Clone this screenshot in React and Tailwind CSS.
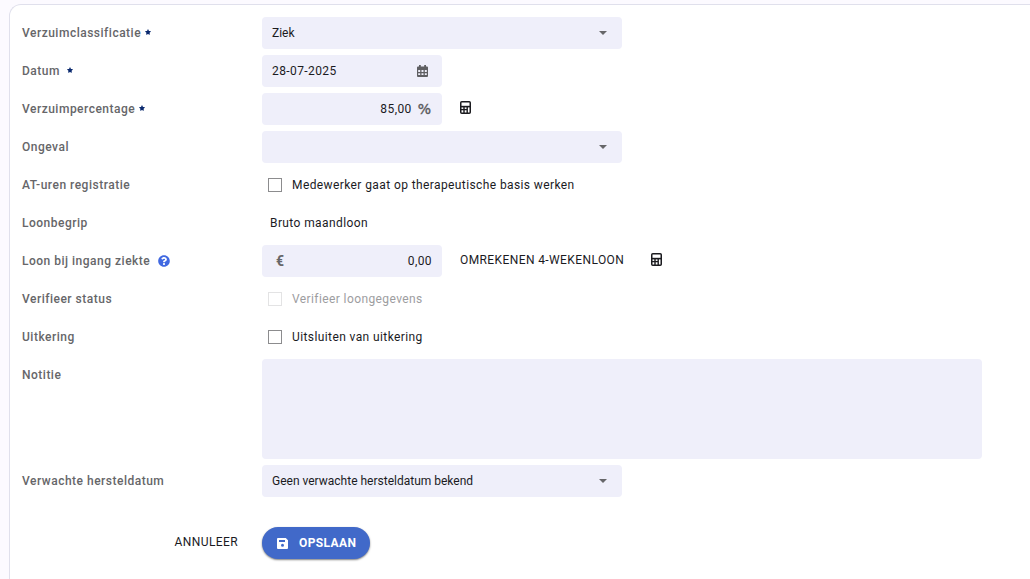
import React, { useState } from 'react'
import { FaQuestionCircle, FaStar } from 'react-icons/fa'

const CalculatorIcon = () => (
    <svg width="11" height="13" viewBox="0 0 11 13" fill="none" className="text-[#1b1b1f]">
        <rect x="0.75" y="0.75" width="9.5" height="11.5" rx="1" stroke="currentColor" strokeWidth="1.5" />
        <path d="M1 5.6h9" stroke="currentColor" strokeWidth="1.6" />
        <path d="M1 8.6h6" stroke="currentColor" strokeWidth="1.3" />
        <path d="M4 5v7M7.2 5v7" stroke="currentColor" strokeWidth="1.4" />
    </svg>
)

const CalendarIcon = () => (
    <svg width="11" height="12" viewBox="0 0 11 12" className="mr-1 shrink-0 text-[#5f5f62]">
        <path
            fill="currentColor"
            fillRule="evenodd"
            d="M2 0h1.8v1.5h3.4V0H9v1.5h1a1 1 0 0 1 1 1V11a1 1 0 0 1-1 1H1a1 1 0 0 1-1-1V2.500a1 1 0 0 1 1-1h1zM1.200 5v1.900h2V5zM4.500 5v1.900h2V5zM7.800 5v1.900h2V5zM1.200 8.200v1.900h2V8.200zM4.500 8.200v1.900h2V8.200zM7.800 8.200v1.900h2V8.200z"
        />
    </svg>
)

const SaveIcon = () => (
    <svg width="11" height="11" viewBox="0 0 11 11" className="mr-[11px]">
        <path
            fill="currentColor"
            fillRule="evenodd"
            d="M1 0h7.800L11 2.200V10a1 1 0 0 1-1 1H1a1 1 0 0 1-1-1V1a1 1 0 0 1 1-1zM2 2v2h6V2zM5.500 5.700a1.500 1.500 0 1 0 0 3a1.500 1.500 0 1 0 0-3z"
        />
    </svg>
)

const Caret = () => (
    <svg width="8" height="4" viewBox="0 0 8 4" className="text-[#666669]">
        <path d="M0 0h8L4 4z" fill="currentColor" />
    </svg>
)

const Row = ({ label, children, required, gap = 'ml-1', help }) => (
    <div className="flex min-h-8 items-start">
        <div className="flex h-8 w-60 shrink-0 items-center font-medium tracking-[0.5px] text-[#666669]">
            <span>{label}</span>
            {required && <FaStar className={`${gap} mb-[3px] size-1.5 text-[#0b2a6f]`} />}
            {help && <FaQuestionCircle className="ml-2 size-3 text-[#4169e1]" />}
        </div>
        {children}
    </div>
)

const Select = ({ value }) => (
    <button type="button" className="flex h-8 w-90 items-center justify-between rounded bg-[#efeffa] pr-[15px] pl-2.5">
        <span>{value}</span>
        <Caret />
    </button>
)

const Checkbox = ({ label, checked, onChange, disabled }) => (
    <label className={`flex h-8 items-center gap-2.5 pl-1.5 tracking-[0.4px] ${disabled ? 'text-[#9d9d9f]' : ''}`}>
        <input
            type="checkbox"
            checked={checked}
            disabled={disabled}
            onChange={(e) => onChange(e.target.checked)}
            className="size-3.5 appearance-none border border-[#8c8c8e] bg-white checked:bg-[#4169c9] disabled:border-[#e3e3e4]"
        />
        <span>{label}</span>
    </label>
)

export default function App() {

    const [datum, setDatum] = useState('28-07-2025')
    const [percentage, setPercentage] = useState('85,00')
    const [loon, setLoon] = useState('0,00')
    const [therapeutisch, setTherapeutisch] = useState(false)
    const [uitsluiten, setUitsluiten] = useState(false)
    const [notitie, setNotitie] = useState('')

    return (
        <div className="h-screen overflow-hidden bg-[#fcfaff] pt-1 pl-[9px] font-[Roboto,sans-serif] text-xs text-[#1b1b1f]">
            <form className="flex h-[600px] flex-col gap-1.5 rounded-tl-xl border-t border-l border-[#e0e0ec] bg-white px-3 pt-3">
                <Row label="Verzuimclassificatie" required>
                    <Select value="Ziek" />
                </Row>
                <Row label="Datum" required gap="ml-[7px]">
                    <div className="flex h-8 w-45 items-center rounded bg-[#efeffa] px-2.5">
                        <input
                            value={datum}
                            onChange={(e) => setDatum(e.target.value)}
                            className="w-full min-w-0 tracking-[0.4px] outline-none"
                        />
                        <CalendarIcon />
                    </div>
                </Row>
                <Row label="Verzuimpercentage" required>
                    <div className="flex h-8 w-45 items-center rounded bg-[#efeffa] px-2.5">
                        <input
                            value={percentage}
                            onChange={(e) => setPercentage(e.target.value)}
                            className="w-full min-w-0 text-right tracking-[0.4px] outline-none"
                        />
                        <span className="mr-px ml-1.5 font-['DejaVu_Sans',sans-serif] text-sm text-[#59595c] [-webkit-text-stroke:0.4px]">%</span>
                    </div>
                    <button type="button" className="mt-2 ml-[18px]">
                        <CalculatorIcon />
                    </button>
                </Row>
                <Row label="Ongeval">
                    <Select value="" />
                </Row>
                <Row label="AT-uren registratie">
                    <Checkbox
                        label="Medewerker gaat op therapeutische basis werken"
                        checked={therapeutisch}
                        onChange={setTherapeutisch}
                    />
                </Row>
                <Row label="Loonbegrip">
                    <span className="pl-2 leading-8 tracking-[0.4px]">Bruto maandloon</span>
                </Row>
                <Row label="Loon bij ingang ziekte" help>
                    <div className="flex h-8 w-45 items-center rounded bg-[#efeffa] pr-2.5 pl-3.5">
                        <span className="text-sm font-bold text-[#666669]">€</span>
                        <input
                            value={loon}
                            onChange={(e) => setLoon(e.target.value)}
                            className="w-full min-w-0 text-right tracking-[0.4px] outline-none"
                        />
                    </div>
                    <button type="button" className="ml-[18px] h-[30px] tracking-[0.4px]">OMREKENEN 4-WEKENLOON</button>
                    <button type="button" className="mt-2 ml-[27px]">
                        <CalculatorIcon />
                    </button>
                </Row>
                <Row label="Verifieer status">
                    <Checkbox label="Verifieer loongegevens" checked={false} onChange={() => {}} disabled />
                </Row>
                <Row label="Uitkering">
                    <Checkbox label="Uitsluiten van uitkering" checked={uitsluiten} onChange={setUitsluiten} />
                </Row>
                <Row label="Notitie">
                    <textarea
                        value={notitie}
                        onChange={(e) => setNotitie(e.target.value)}
                        className="h-25 w-180 resize-none rounded bg-[#efeffa] p-2.5 outline-none"
                    />
                </Row>
                <Row label="Verwachte hersteldatum">
                    <Select value="Geen verwachte hersteldatum bekend" />
                </Row>
                <div className="mt-6 flex">
                    <div className="flex w-60 justify-end pr-6">
                        <button type="button" className="h-[30px] tracking-[0.4px]">ANNULEER</button>
                    </div>
                    <button
                        type="submit"
                        className="flex h-8 w-27 items-center rounded-full bg-[#4169c9] pl-[15px] font-bold tracking-[0.4px] text-white shadow-[0_1px_2px_rgba(0,0,0,0.5)]"
                    >
                        <SaveIcon />
                        OPSLAAN
                    </button>
                </div>
            </form>
        </div>
    )
}
